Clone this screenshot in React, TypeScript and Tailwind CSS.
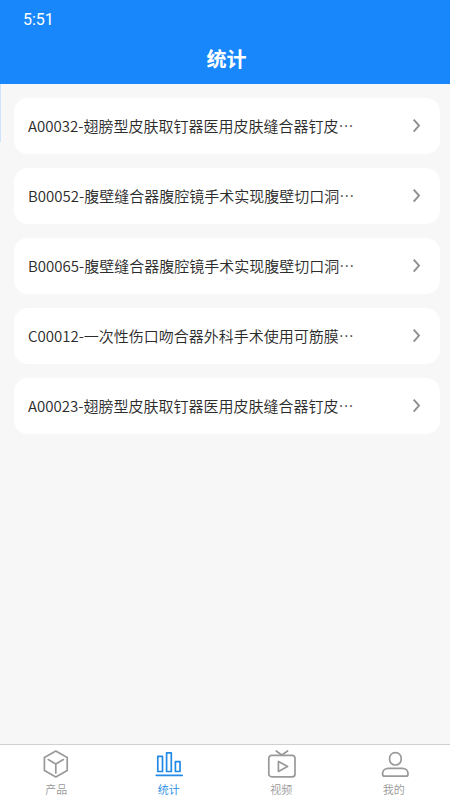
import type { ReactNode } from 'react';
import clsx from 'clsx';

interface Product {
  code: string;
  name: string;
}

interface Tab {
  label: string;
  icon: ReactNode;
  active?: boolean;
}

const products: Product[] = [
  { code: 'A00032', name: '翅膀型皮肤取钉器医用皮肤缝合器钉皮…' },
  { code: 'B00052', name: '腹壁缝合器腹腔镜手术实现腹壁切口洞…' },
  { code: 'B00065', name: '腹壁缝合器腹腔镜手术实现腹壁切口洞…' },
  { code: 'C00012', name: '一次性伤口吻合器外科手术使用可筋膜…' },
  { code: 'A00023', name: '翅膀型皮肤取钉器医用皮肤缝合器钉皮…' },
];

function TabIcon({ children }: { children: ReactNode }) {
  return (
    <svg
      viewBox="0 0 30 30"
      className="size-[30px]"
      fill="none"
      stroke="currentColor"
      strokeWidth="1.7"
      strokeLinecap="round"
      strokeLinejoin="round"
      aria-hidden="true"
    >
      {children}
    </svg>
  );
}

const tabs: Tab[] = [
  {
    label: '产品',
    icon: (
      <TabIcon>
        <path d="M14.8 2.1 26.2 8.4v13.2L14.8 28 3.4 21.6V8.4z" />
        <path d="M7.2 10.6 14.8 15l7.6-4.4M14.8 15v9" />
      </TabIcon>
    ),
  },
  {
    label: '统计',
    active: true,
    icon: (
      <TabIcon>
        <path d="M3.8 7.4h4.7v15.1H3.8zM12.6 3.8h4.7v18.7h-4.7zM21.4 12.7H26v9.8h-4.6z" />
        <path d="M2.3 26.3h25.9" />
      </TabIcon>
    ),
  },
  {
    label: '视频',
    icon: (
      <TabIcon>
        <rect x="2.8" y="6.3" width="26.2" height="21.6" rx="3" />
        <path d="m10.2 2 5.6 4L21.6 2" />
        <path d="M12.4 12.4v10l9.2-5z" />
      </TabIcon>
    ),
  },
  {
    label: '我的',
    icon: (
      <TabIcon>
        <rect x="10.6" y="3.6" width="11.6" height="12.4" rx="5.6" />
        <path d="M9.4 19.4h14c3.4 0 5.6 2.3 5.6 5.2v.6c0 1.2-.8 2-2 2H5.6c-1.2 0-2-.8-2-2v-.6c0-2.9 2.2-5.2 5.8-5.2z" />
      </TabIcon>
    ),
  },
];

function Header() {
  return (
    <header className="flex h-[84px] flex-col bg-[#1787fb] text-white">
      <div className="px-[23px] pt-2 font-[Roboto,sans-serif] text-base leading-6">5:51</div>
      <h1 className="pt-3 pl-[3px] text-center text-[20px] leading-[30px] font-bold">统计</h1>
    </header>
  );
}

function ProductRow({ code, name }: Product) {
  return (
    <li>
      <a href={`#${code}`} className="flex h-14 items-center justify-between rounded-[14px] bg-white pr-[18px] pl-[14px]">
        <span className="truncate text-[15px] leading-6 font-[350] text-[#2b2b2b]">
          {code}-{name}
        </span>
        <svg viewBox="0 0 10 16" className="h-4 w-[10px] shrink-0" fill="none" stroke="#8f8f8f" strokeWidth="1.9" aria-hidden="true">
          <path d="M1.7 1.6 7 7.6l-5.3 6" />
        </svg>
      </a>
    </li>
  );
}

function TabBar() {
  return (
    <nav className="grid h-14 grid-cols-4 border-t border-[#d0d0d0] bg-white">
      {tabs.map(({ label, icon, active }) => (
        <a
          key={label}
          href={`#${label}`}
          aria-current={active ? 'page' : undefined}
          className={clsx('flex flex-col items-center pt-1', active ? 'text-[#2389e6]' : 'text-[#999999]')}
        >
          {icon}
          <span className="text-[11px] leading-5 font-[350]">{label}</span>
        </a>
      ))}
    </nav>
  );
}

export default function App() {
  return (
    <div lang="zh-CN" className="flex min-h-screen flex-col bg-[#f7f7f7] font-['Noto_Sans_CJK_SC',sans-serif]">
      <Header />
      <main className="flex flex-1 items-start">
        <div className="h-[58px] w-px bg-[#cfe3fa]" />
        <ul className="flex min-w-0 flex-1 flex-col gap-[14px] py-[14px] pr-[10px] pl-[13px]">
          {products.map((product) => (
            <ProductRow key={product.code} {...product} />
          ))}
        </ul>
      </main>
      <TabBar />
    </div>
  );
}
